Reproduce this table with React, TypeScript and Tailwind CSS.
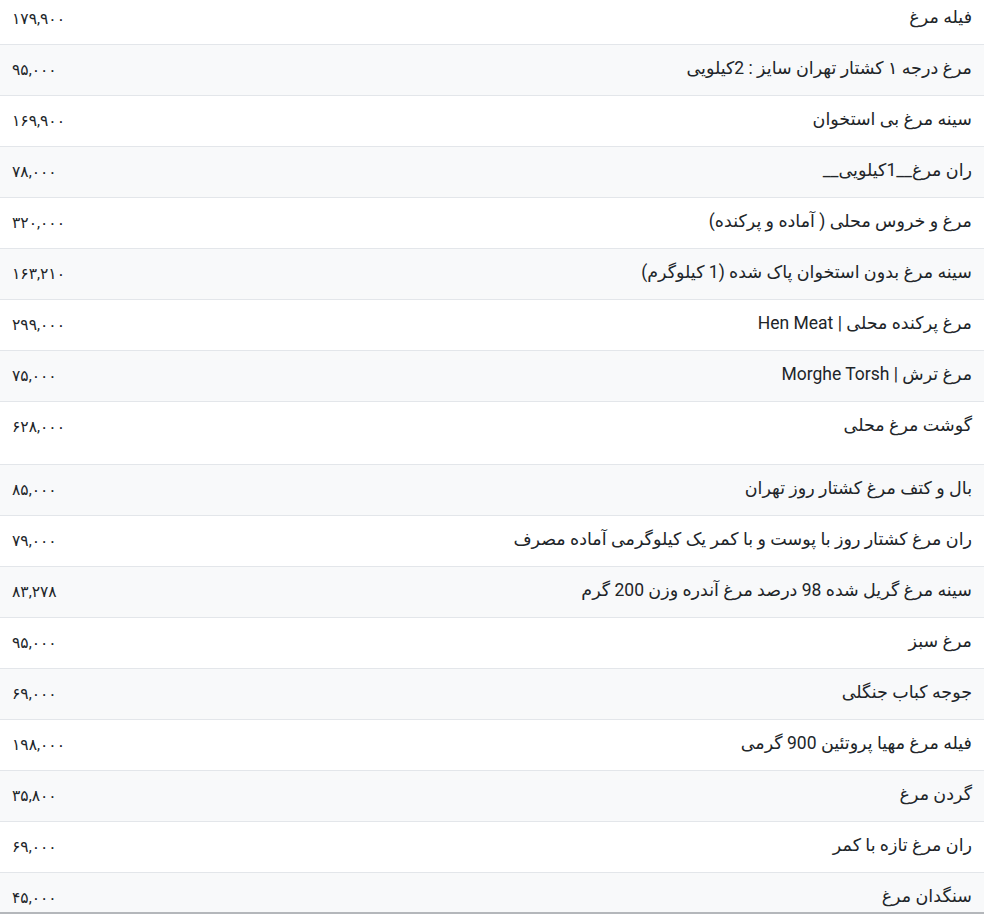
const rows: { name: string; price: string; tall?: boolean }[] = [
  { name: "فیله مرغ", price: "۱۷۹,۹۰۰" },
  { name: "مرغ درجه ۱ کشتار تهران سایز : 2کیلویی", price: "۹۵,۰۰۰" },
  { name: "سینه مرغ بی استخوان", price: "۱۶۹,۹۰۰" },
  { name: "ران مرغ__1کیلویی__", price: "۷۸,۰۰۰" },
  { name: "مرغ و خروس محلی ( آماده و پرکنده)", price: "۳۲۰,۰۰۰" },
  { name: "سینه مرغ بدون استخوان پاک شده (1 کیلوگرم)", price: "۱۶۳,۲۱۰" },
  { name: "مرغ پرکنده محلی | Hen Meat", price: "۲۹۹,۰۰۰" },
  { name: "مرغ ترش | Morghe Torsh", price: "۷۵,۰۰۰" },
  { name: "گوشت مرغ محلی", price: "۶۲۸,۰۰۰", tall: true },
  { name: "بال و کتف مرغ کشتار روز تهران", price: "۸۵,۰۰۰" },
  { name: "ران مرغ کشتار روز با پوست و با کمر یک کیلوگرمی آماده مصرف", price: "۷۹,۰۰۰" },
  { name: "سینه مرغ گریل شده 98 درصد مرغ آندره وزن 200 گرم", price: "۸۳,۲۷۸" },
  { name: "مرغ سبز", price: "۹۵,۰۰۰" },
  { name: "جوجه کباب جنگلی", price: "۶۹,۰۰۰" },
  { name: "فیله مرغ مهیا پروتئین 900 گرمی", price: "۱۹۸,۰۰۰" },
  { name: "گردن مرغ", price: "۳۵,۸۰۰" },
  { name: "ران مرغ تازه با کمر", price: "۶۹,۰۰۰" },
  { name: "سنگدان مرغ", price: "۴۵,۰۰۰" },
];

export default function App() {
  return (
    <div
      className="h-[914px] overflow-hidden border-b-2 border-[#b4b7bb] bg-white text-[#212529] leading-6"
      style={{ fontFamily: "Roboto, 'DejaVu Sans', sans-serif" }}
    >
      <div dir="rtl" className="-mt-[6px]">
        {rows.map((r, i) => (
          <div
            key={i}
            className={`flex justify-between items-start px-3 pt-[11px] border-b border-[#e3e6ea] ${
              r.tall ? "h-[63px]" : "h-[51px]"
            } ${i % 2 === 1 ? "bg-[#f8f9fa]" : "bg-white"}`}
          >
            <span className="text-[17.5px]">{r.name}</span>
            <span dir="ltr" className="text-[15.5px] mt-[2px]">{r.price}</span>
          </div>
        ))}
      </div>
    </div>
  );
}
